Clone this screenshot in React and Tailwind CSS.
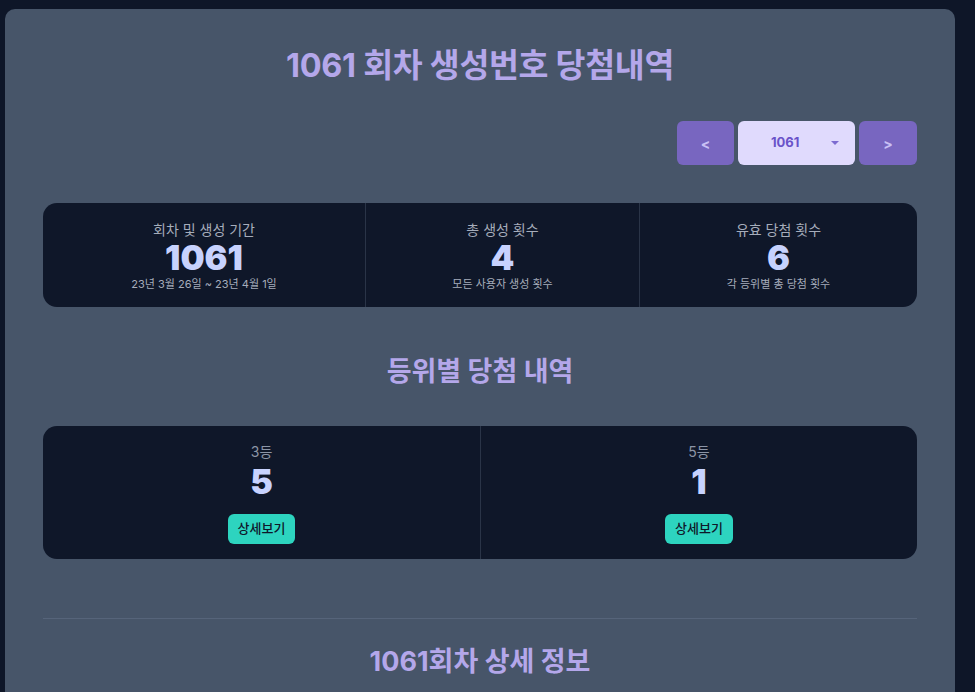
import React from "react";

const font = { fontFamily: "Inter, 'Noto Sans CJK KR', 'Noto Sans', sans-serif" };
const numFont = { fontFamily: "Inter, 'Noto Sans CJK KR', sans-serif" };

function Stat({ label, value, desc, border }) {
  return (
    <div className={`flex flex-col items-center justify-center pt-[2px] ${border ? "border-l border-[#2a3447]" : ""}`}>
      <div className="text-[14px] leading-[18px] text-[#a6adbb]">{label}</div>
      <div className="text-[34px] leading-[38px] font-black text-[#c7d2fe]" style={numFont}>{value}</div>
      <div className="text-[11px] leading-[14px] text-[#a6adbb]">{desc}</div>
    </div>
  );
}

function Rank({ label, value, border }) {
  return (
    <div className={`flex flex-col items-center pt-[16px] ${border ? "border-l border-[#2a3447]" : ""}`}>
      <div className="text-[14px] leading-[20px] text-[#8c95a6]">{label}</div>
      <div className="text-[34px] leading-[38px] font-black text-[#c7d2fe] mt-[1px]" style={numFont}>{value}</div>
      <button className="mt-[13px] h-[30px] px-[10px] rounded-[6px] bg-[#2dd4bf] text-[13px] font-medium text-[#0f172a]">상세보기</button>
    </div>
  );
}

export default function App() {
  return (
    <div className="min-h-[692px] bg-[#0e1628] pl-[5px] pt-[9px] pr-[20px]" style={font}>
      <div className="w-[950px] bg-[#475569] rounded-t-[10px] px-[38px] pt-[39px] pb-[20px] h-[683px] overflow-hidden">
        <h1 className="text-center text-[32.5px] leading-[36px] font-bold text-[#b4a7ea] tracking-[-0.3px]">1061 회차 생성번호 당첨내역</h1>
        <div className="flex justify-end gap-[4px] mt-[37px]">
          <button className="w-[57px] h-[44px] rounded-[6px] bg-[#7866c0] text-[#c9c0f5] text-[14px] font-bold">&lt;</button>
          <div className="w-[117px] h-[44px] rounded-[6px] bg-[#e0dafd] flex items-center pl-[33px] pr-[16px]">
            <span className="text-[13px] font-bold text-[#6a52c9]">1061</span>
            <svg className="ml-auto" width="8" height="5" viewBox="0 0 8 5"><path d="M0 0 L8 0 L4 4 Z" fill="#7c6bd0" /></svg>
          </div>
          <button className="w-[58px] h-[44px] rounded-[6px] bg-[#7866c0] text-[#c9c0f5] text-[14px] font-bold">&gt;</button>
        </div>
        <div className="mt-[38px] h-[104px] rounded-[14px] bg-[#0f1729] grid grid-cols-[322px_274px_1fr]">
          <Stat label="회차 및 생성 기간" value="1061" desc="23년 3월 26일 ~ 23년 4월 1일" />
          <Stat label="총 생성 횟수" value="4" desc="모든 사용자 생성 횟수" border />
          <Stat label="유효 당첨 횟수" value="6" desc="각 등위별 총 당첨 횟수" border />
        </div>
        <h2 className="mt-[48px] text-center text-[27px] leading-[34px] font-bold text-[#b4a7ea]">등위별 당첨 내역</h2>
        <div className="mt-[37px] h-[133px] rounded-[14px] bg-[#0f1729] grid grid-cols-2">
          <Rank label="3등" value="5" />
          <Rank label="5등" value="1" border />
        </div>
        <div className="mt-[59px] border-t border-[#56647a]"></div>
        <h2 className="mt-[26px] text-center text-[27px] leading-[34px] font-bold text-[#b4a7ea]">1061회차 상세 정보</h2>
      </div>
    </div>
  );
}
